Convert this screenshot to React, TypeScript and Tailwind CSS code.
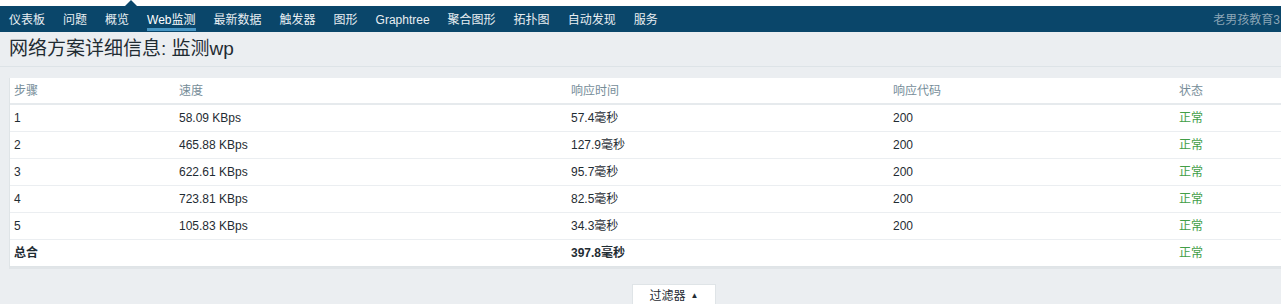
import React from "react";

const navItems = ["仪表板", "问题", "概览", "Web监测", "最新数据", "触发器", "图形", "Graphtree", "聚合图形", "拓扑图", "自动发现", "服务"];

const rows = [
  ["1", "58.09 KBps", "57.4毫秒", "200"],
  ["2", "465.88 KBps", "127.9毫秒", "200"],
  ["3", "622.61 KBps", "95.7毫秒", "200"],
  ["4", "723.81 KBps", "82.5毫秒", "200"],
  ["5", "105.83 KBps", "34.3毫秒", "200"],
];

const cols = "grid grid-cols-[165px_392px_322px_286px_1fr]";

export default function App() {
  return (
    <div
      className="h-[304px] w-[1281px] overflow-hidden bg-[#ebeef1] text-[12px] text-[#1f2c33]"
      style={{ fontFamily: '"Liberation Sans", Arial, "Noto Sans CJK SC", sans-serif' }}
    >
      {/* top white strip with indicator */}
      <div className="relative h-[6px] bg-white">
        <div className="absolute left-[125px] top-0 h-0 w-0 border-x-[6px] border-b-[6px] border-x-transparent border-b-[#0a466a]" />
      </div>
      {/* nav */}
      <div className="flex h-[26px] items-stretch bg-[#0a466a] pt-[1px]">
        {navItems.map((n) => (
          <div
            key={n}
            className={
              "relative flex items-center px-[9px] " +
              (n === "Web监测" ? "text-white" : "text-[#e8eef2]")
            }
          >
            {n}
            {n === "Web监测" && (
              <div className="absolute bottom-[1px] left-[9px] right-[9px] h-[3px] bg-[#4796c4]" />
            )}
          </div>
        ))}
        <div className="ml-auto flex items-center whitespace-nowrap pr-[1px] text-[#8ba5b6]">
          老男孩教育3
        </div>
      </div>
      {/* title */}
      <div className="flex h-[35px] items-center border-b border-[#dde3e7] pl-[9px]">
        <h1 className="text-[19px] font-normal text-[#1f2c33]">网络方案详细信息: 监测wp</h1>
      </div>
      {/* table */}
      <div className="ml-[9px] mt-[11px] w-[1290px] border-x border-b border-[#dfe4e7] bg-white">
        <div className={cols + " h-[27px] items-center border-b-2 border-[#e6eaed] text-[#768d99]"}>
          <div className="pl-[4px]">步骤</div>
          <div className="pl-[4px]">速度</div>
          <div className="pl-[4px]">响应时间</div>
          <div className="pl-[4px]">响应代码</div>
          <div className="pl-[4px]">状态</div>
        </div>
        {rows.map((r) => (
          <div key={r[0]} className={cols + " h-[27px] items-center border-b border-[#ebeef1]"}>
            <div className="pl-[4px]">{r[0]}</div>
            <div className="pl-[4px]">{r[1]}</div>
            <div className="pl-[4px]">{r[2]}</div>
            <div className="pl-[4px]">{r[3]}</div>
            <div className="pl-[4px] text-[#429e47]">正常</div>
          </div>
        ))}
        <div className={cols + " h-[26px] items-center font-bold"}>
          <div className="pl-[4px]">总合</div>
          <div className="pl-[4px]"></div>
          <div className="pl-[4px]">397.8毫秒</div>
          <div className="pl-[4px]"></div>
          <div className="pl-[4px] font-normal text-[#429e47]">正常</div>
        </div>
      </div>
      <div className="ml-[9px] h-[2px] bg-[#e1e5e8]" />
      {/* filter area */}
      <div className="mt-[15px] flex border-b border-[#dfe4e7]">
        <div className="ml-[632px] flex h-[20px] w-[84px] items-center justify-center border-x border-t border-[#dfe4e7] bg-white pt-[2px]">
          过滤器 <span className="ml-[5px] text-[8px]">▲</span>
        </div>
      </div>
    </div>
  );
}
